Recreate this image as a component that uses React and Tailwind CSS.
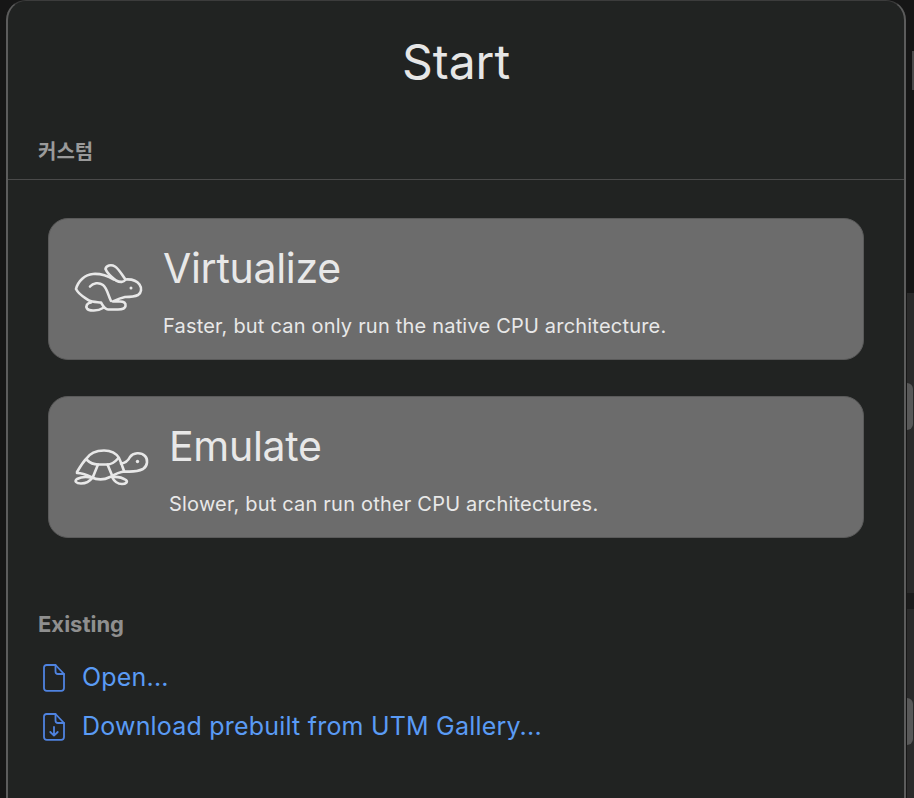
import React from 'react';

const sans = 'font-["Inter","Noto_Sans_CJK_KR",sans-serif]';

function Rabbit() {
    return (
        <svg width="80" height="60" viewBox="0 0 80 60" fill="none" stroke="#e8e8e8" strokeWidth="2.6" strokeLinecap="round" strokeLinejoin="round" className="shrink-0">
            <path d="M35.5 10C36 6.5 41 5 45 7.5C49 10 52 16 55.5 20.5C54 23.5 50 23.5 46 21.5C42 18.5 37 14 35.5 10Z" />
            <path d="M44 20.5C37 16.5 30 14.5 23 15C15 15.5 8 22 6 30C9 36 14 38 19 41.5C22 43 27 43 31 43.5C33 47 34.5 50.5 38 50.5H48C52 50.5 55 50 55.5 47C56 44 54 42.5 50 42.5H43C46 41 50 39 55 38C60 38 64 38 68 36C71.5 34 72 29 69.5 25.5C67 22 62 20 55.5 20.5" />
            <path d="M20 27.5C23 24 29 23 33 26C37 29 38 36 41 42" />
            <path d="M21 43.5C17 44 15.5 47 17 49.5C19 52.5 28 52 33 49" />
            <circle cx="61" cy="29" r="1.5" fill="#e8e8e8" stroke="none" />
        </svg>
    );
}

function Turtle() {
    return (
        <svg width="80" height="55" viewBox="0 0 80 55" fill="none" stroke="#e8e8e8" strokeWidth="2.6" strokeLinecap="round" strokeLinejoin="round" className="shrink-0">
            <path d="M7 32C10 27 13 22 16 19C20 13 27 10.5 34 10.5C41 10.5 46 13 49 18C51 22 52.5 27 54 31" />
            <path d="M7 33C13 33 17 35 21 37C27 40 34 40 40 37C45 34 49 32 55 31.5C62 32 69 31 73 29C78 26 78 19 75 16C71 12 63 12.5 60 17C58 21 56 23 51 23.5" />
            <path d="M17 20C20 23 24 24.5 28 24.5H37C41 24.5 45 22 48 18.5" />
            <path d="M28 24.5L22.5 38M37.5 24.5L42.5 36.5" />
            <path d="M22 38C17 36.5 11 37 7 39C4 41 6 43.5 11 43.5C16 43.5 20 41 22 38Z" />
            <path d="M42 37C47 36.5 53 38 56 40C58 42 56 44 52 44C47 44 44 41 42 37Z" />
            <circle cx="67.5" cy="21.5" r="1.7" fill="#e8e8e8" stroke="none" />
        </svg>
    );
}

function FileIcon({ download }) {
    return (
        <svg width="22" height="28" viewBox="0 0 22 28" fill="none" stroke="#4f83e0" strokeWidth="1.8" strokeLinecap="round" strokeLinejoin="round" className="shrink-0">
            <path d="M3.5 1H12.5L21 10V24C21 25.8 20 26.8 18.2 26.8H3.8C2 26.8 1 25.8 1 24V3.5C1 2 2 1 3.5 1Z" />
            <path d="M12.5 1V7.5C12.5 9 13.5 10 15 10H21" />
            {download && <path d="M11 14V22.5M7.3 19L11 22.7L14.7 19" />}
        </svg>
    );
}

function ModeCard({ icon, title, text, gap }) {
    return (
        <div className={`h-[142px] rounded-[20px] bg-[#6c6c6c] border border-[#5a5a5a] flex items-center pl-[21px] ${gap}`}>
            {icon}
            <div className="flex flex-col pt-[2px]">
                <div className="text-[41px] leading-[50px] text-[#e8e8e8] tracking-[-0.3px]">{title}</div>
                <div className="text-[20px] leading-[24px] mt-[21px] text-[#e8e8e8] tracking-[0.2px]">{text}</div>
            </div>
        </div>
    );
}

function LinkRow({ download, children }) {
    return (
        <div className="flex items-center gap-[17px] h-[49px] pl-[35px] text-[25px] tracking-[0.2px] text-[#5a9bf5]">
            <FileIcon download={download} />
            <span>{children}</span>
        </div>
    );
}

// sliver of the window behind, visible on the right edge
function BackWindowEdge() {
    return (
        <div className="flex-1 ml-px flex flex-col">
            <div className="h-[293px] bg-[#161616] flex flex-col items-end pt-[51px]">
                <div className="w-[2px] h-[39px] bg-[#4a4a4a]" />
            </div>
            <div className="h-[300px] bg-[#2a2a2a] pt-[90px]">
                <div className="w-[6px] h-[47px] rounded-r-full bg-[#585858]" />
            </div>
            <div className="h-[16px] bg-[#1c1c1c]" />
            <div className="flex-1 bg-[#2a2a2a] pt-[89px]">
                <div className="w-[6px] h-[47px] rounded-r-full bg-[#585858]" />
            </div>
        </div>
    );
}

export default function App() {
    return (
        <div className={`w-[914px] h-[798px] overflow-hidden flex bg-[#161616] ${sans}`}>
            <div className="w-[6px] shrink-0" />
            <div className="w-[900px] h-[798px] shrink-0 rounded-t-[20px] border-x-2 border-t border-x-[#5c5c5c] border-t-[#3c3c3c] bg-[#212322] flex flex-col">
                <h1 className="text-[48px] leading-[58px] text-center text-[#e6e6e6] mt-[32px]">Start</h1>
                <div className="mt-[48px] h-[27px] pl-[30px] text-[20px] font-bold leading-[27px] text-[#9a9a9a]">커스텀</div>
                <div className="mt-[13px] h-px bg-[#4a4a4a]" />
                <div className="mt-[38px] mx-[40px] flex flex-col gap-[36px]">
                    <ModeCard icon={<Rabbit />} title="Virtualize" text="Faster, but can only run the native CPU architecture." gap="gap-[13px]" />
                    <ModeCard icon={<Turtle />} title="Emulate" text="Slower, but can run other CPU architectures." gap="gap-[19px]" />
                </div>
                <div className="mt-[70px] pl-[30px] text-[22px] leading-[32px] font-bold text-[#8f8f8f]">Existing</div>
                <div className="mt-[13px] flex flex-col">
                    <LinkRow>Open...</LinkRow>
                    <LinkRow download>Download prebuilt from UTM Gallery...</LinkRow>
                </div>
            </div>
            <BackWindowEdge />
        </div>
    );
}
